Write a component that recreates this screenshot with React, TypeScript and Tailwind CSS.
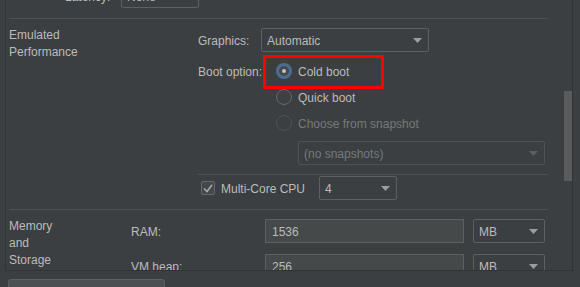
import React from "react";

function Arrow({ disabled }: { disabled?: boolean }) {
  return (
    <svg width="9" height="5" viewBox="0 0 9 5">
      <path d="M0 0 H9 L4.5 5 Z" fill={disabled ? "#5c5f61" : "#9a9da1"} />
    </svg>
  );
}

function Dropdown({ text, className, disabled }: { text: string; className: string; disabled?: boolean }) {
  return (
    <div
      className={
        "flex h-[24px] items-center justify-between rounded-[2px] border pl-[5px] pr-[6px] " +
        (disabled ? "border-[#4f5254] text-[#787878] " : "border-[#5e6060] text-[#bbbbbb] ") +
        className
      }
    >
      <span className="whitespace-nowrap pt-[2px]">{text}</span>
      <Arrow disabled={disabled} />
    </div>
  );
}

function Radio({ checked, disabled }: { checked?: boolean; disabled?: boolean }) {
  if (checked) {
    return (
      <div className="flex h-[16px] w-[16px] items-center justify-center rounded-full border-[3px] border-[#4a6e93] bg-[#45494a]">
        <div className="h-[4px] w-[4px] rounded-full bg-[#c2c2c2]" />
      </div>
    );
  }
  return (
    <div
      className={
        "h-[16px] w-[16px] rounded-full border " +
        (disabled ? "border-[#4f5254] bg-[#3c3f41]" : "border-[#656769] bg-[#3e4143]")
      }
    />
  );
}

export default function App() {
  return (
    <div className="h-[287px] w-[580px] overflow-hidden bg-[#3c3f41] font-['Liberation_Sans',sans-serif] text-[12px] text-[#bbbbbb]">
      <div className="relative ml-[5px] h-[271px] w-[568px] overflow-hidden border-x border-b border-[#313335]">
        <div className="-mt-[16px] w-[542px] pl-[3px]">
          {/* Latency row */}
          <div className="flex h-[24px] items-center">
            <span className="ml-[56px] w-[56px] pt-[2px]">Latency:</span>
            <Dropdown text="None" className="w-[78px]" />
          </div>
          <div className="mt-[10px] h-px bg-[#515151]" />

          {/* Emulated Performance */}
          <div className="flex">
            <div className="w-[189px] pt-[8px] leading-[17px]">
              Emulated
              <br />
              Performance
            </div>
            <div className="w-[350px] pb-[9px]">
              <div className="mt-[9px] flex items-center">
                <span className="w-[63px] pt-[2px]">Graphics:</span>
                <Dropdown text="Automatic" className="w-[168px]" />
              </div>
              <div className="mt-[6px] flex">
                <div className="flex h-[26px] w-[78px] items-center whitespace-nowrap pt-[2px]">Boot option:</div>
                <div className="flex flex-col">
                  <div className="relative flex h-[26px] items-center gap-[6px]">
                    <Radio checked />
                    <span className="pt-[2px]">Cold boot</span>
                    <div className="absolute left-[-13px] top-[-3px] h-[34px] w-[121px] border-[3px] border-[#ff0000]" />
                  </div>
                  <div className="flex h-[26px] items-center gap-[6px]">
                    <Radio />
                    <span className="pt-[2px]">Quick boot</span>
                  </div>
                  <div className="flex h-[26px] items-center gap-[6px]">
                    <Radio disabled />
                    <span className="pt-[2px] text-[#787878]">Choose from snapshot</span>
                  </div>
                </div>
              </div>
              <div className="ml-[100px] mt-[5px]">
                <Dropdown text="(no snapshots)" className="w-[247px]" disabled />
              </div>
              <div className="mt-[9px] h-px bg-[#515151]" />
              <div className="mt-[1px] flex h-[24px] items-center">
                <div className="ml-[3px] flex h-[14px] w-[14px] items-center justify-center rounded-[2px] border border-[#656769] bg-[#43494a]">
                  <svg width="10" height="9" viewBox="0 0 10 9">
                    <path d="M1 4.5 L4 7.5 L9 1" fill="none" stroke="#a9a9a9" strokeWidth="1.6" />
                  </svg>
                </div>
                <span className="ml-[6px] w-[98px] whitespace-nowrap pt-[2px]">Multi-Core CPU</span>
                <Dropdown text="4" className="w-[78px]" />
              </div>
            </div>
          </div>
          <div className="h-px bg-[#515151]" />

          {/* Memory and Storage */}
          <div className="flex">
            <div className="w-[122px] pt-[8px] leading-[17px]">
              Memory
              <br />
              and
              <br />
              Storage
            </div>
            <div className="flex flex-col">
              <div className="mt-[9px] flex h-[24px] items-center">
                <span className="w-[134px] pt-[2px]">RAM:</span>
                <div className="flex h-[24px] w-[199px] items-center border border-[#5e6060] bg-[#45494a] pl-[6px] pt-[2px]">1536</div>
                <Dropdown text="MB" className="ml-[9px] w-[72px]" />
              </div>
              <div className="mt-[11px] flex h-[24px] items-center">
                <span className="w-[134px] pt-[2px]">VM heap:</span>
                <div className="flex h-[24px] w-[199px] items-center border border-[#5e6060] bg-[#45494a] pl-[6px] pt-[2px]">256</div>
                <Dropdown text="MB" className="ml-[9px] w-[72px]" />
              </div>
            </div>
          </div>
        </div>
        <div className="absolute right-0 top-[91px] h-[90px] w-[8px] bg-[#595b5d]" />
      </div>
      <div className="ml-[8px] mt-[8px] h-[20px] w-[157px] rounded-t-[3px] border border-[#5e6060] bg-[#4c5052]" />
    </div>
  );
}
